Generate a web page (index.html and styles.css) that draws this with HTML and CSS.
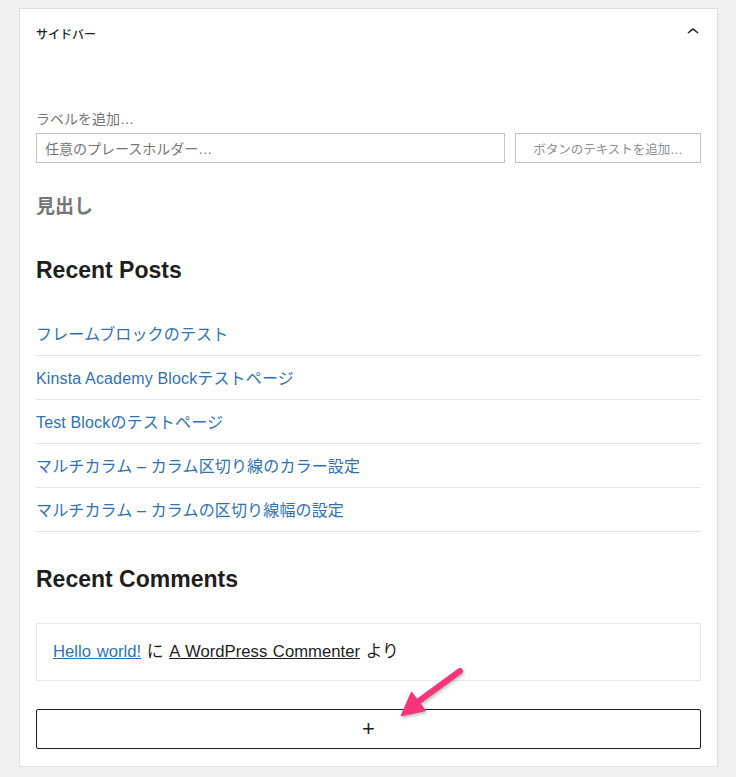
FILE: index.html
```html
<!DOCTYPE html>
<html lang="ja">
<head>
<meta charset="utf-8">
<title>サイドバー</title>
<link rel="stylesheet" href="styles.css">
</head>
<body>
<div class="panel">
  <div class="panel-header">
    <span class="panel-title">サイドバー</span>
    <svg class="chevron" width="24" height="24" viewBox="0 0 24 24"><path d="M6.5 12.4L12 8l5.5 4.4-.9 1.2L12 10l-4.6 3.6-.9-1.2z" fill="#1e1e1e"/></svg>
  </div>
  <div class="panel-body">
    <div class="search">
      <div class="search-label">ラベルを追加…</div>
      <div class="search-row">
        <div class="search-input">任意のプレースホルダー…</div>
        <div class="search-button">ボタンのテキストを追加…</div>
      </div>
    </div>
    <h2 class="heading-placeholder">見出し</h2>
    <h2 class="widget-title">Recent Posts</h2>
    <ul class="post-list">
      <li><a href="#">フレームブロックのテスト</a></li>
      <li><a href="#">Kinsta Academy Blockテストページ</a></li>
      <li><a href="#">Test Blockのテストページ</a></li>
      <li><a href="#">マルチカラム – カラム区切り線のカラー設定</a></li>
      <li><a href="#">マルチカラム – カラムの区切り線幅の設定</a></li>
    </ul>
    <h2 class="widget-title comments-title">Recent Comments</h2>
    <div class="comment-box"><a href="#" class="comment-post">Hello world!</a> に <a href="#" class="comment-author">A WordPress Commenter</a> より</div>
    <button class="add-block" type="button">+</button>
  </div>
</div>
<svg class="arrow" width="80" height="64" viewBox="0 0 80 64">
  <line x1="65" y1="11" x2="24" y2="41" stroke="#f7357a" stroke-width="6" stroke-linecap="round"/>
  <polygon points="16.5,32.5 6.5,55.5 30,50.5" fill="#f7357a" stroke="#f7357a" stroke-width="1.5" stroke-linejoin="round"/>
</svg>
</body>
</html>
```

FILE: styles.css
```css
* { box-sizing: border-box; }
html, body { margin: 0; }
body {
  background: #f0f0f0;
  padding: 8px 18px 10px 19px;
  font-family: "Liberation Sans", "Noto Sans CJK JP", sans-serif;
  color: #1e1e1e;
  position: relative;
}
.panel {
  width: 699px;
  background: #fff;
  border: 1px solid #e0e0e0;
}
.panel-header {
  height: 48px;
  display: flex;
  align-items: center;
  justify-content: space-between;
  padding: 0 16px 0 16px;
}
.panel-title {
  font-size: 12px;
  font-weight: 500;
  color: #1e1e1e;
}
.chevron { display: block; margin-top: -2px; margin-right: -4px; }
.panel-body {
  padding: 52px 16px 17px 16px;
  display: flex;
  flex-direction: column;
}
.search-label {
  font-size: 14px;
  line-height: 20px;
  color: #757575;
  margin-bottom: 4px;
}
.search-row {
  display: flex;
  gap: 10px;
}
.search-input, .search-button {
  height: 30px;
  border: 1px solid #c3c4c7;
  display: flex;
  align-items: center;
  color: #757575;
}
.search-input {
  flex: 1;
  padding-left: 8px;
  font-size: 14px;
}
.search-button {
  width: 186px;
  justify-content: center;
  font-size: 12.5px;
  color: #8c8f94;
}
.heading-placeholder {
  margin: 31px 0 0;
  font-size: 19px;
  line-height: 26px;
  font-weight: 700;
  color: #767676;
}
.widget-title {
  margin: 37px 0 0;
  font-size: 23px;
  line-height: 26px;
  font-weight: 700;
  color: #1e1e1e;
}
.post-list {
  list-style: none;
  margin: 29px 0 0;
  padding: 0;
}
.post-list li {
  height: 44px;
  padding-bottom: 2px;
  border-bottom: 1px solid #e5e5e5;
  display: flex;
  align-items: center;
}
.post-list a {
  color: #2f72b4;
  text-decoration: none;
  font-size: 16px;
  letter-spacing: 0.15px;
}
.comments-title { margin-top: 34px; }
.comment-box {
  margin-top: 31px;
  height: 58px;
  border: 1px solid #e8e8e8;
  padding: 0 16px;
  font-size: 16.7px;
  line-height: 56px;
  word-spacing: 1px;
  color: #1e1e1e;
}
.comment-post { color: #2f72b4; text-decoration: underline; }
.comment-author { color: #1e1e1e; text-decoration: underline; }
.add-block {
  margin-top: 28px;
  height: 40px;
  width: 100%;
  background: #fff;
  border: 1px solid #1e1e1e;
  border-radius: 2px;
  font-family: "Liberation Sans", sans-serif;
  font-size: 22px;
  font-weight: 300;
  color: #1e1e1e;
  padding: 0;
  line-height: 1;
}
.arrow {
  position: absolute;
  left: 395px;
  top: 660px;
  filter: drop-shadow(1px 2px 1.5px rgba(0,0,0,0.25));
}
```
